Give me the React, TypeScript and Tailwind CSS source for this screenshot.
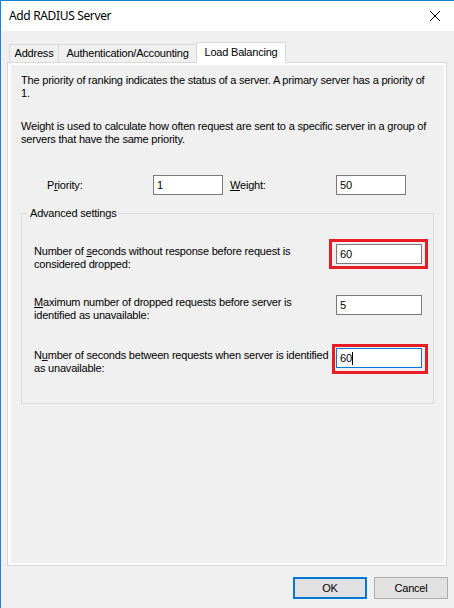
import React from 'react';

// Windows-style "Add RADIUS Server" dialog, Load Balancing tab

const font = "font-['Liberation_Sans',Arial,sans-serif]";

function TextBox({ value, focused = false, caret = false, className = '' }: { value: string; focused?: boolean; caret?: boolean; className?: string }) {
  return (
    <div
      className={`h-[20px] bg-white border flex items-center pl-[3px] text-[11px] text-black ${
        focused ? 'border-[#0078d7]' : 'border-[#7a7a7a]'
      } ${className}`}
    >
      <span>{value}</span>
      {caret && <span className="inline-block w-px h-[13px] bg-black" />}
    </div>
  );
}

function Highlight({ className }: { className: string }) {
  return <span className={`absolute border-[3px] border-[#e81c24] pointer-events-none ${className}`} />;
}

function SettingRow({ children, value, focused, caret, highlight, className = '' }: {
  children: React.ReactNode;
  value: string;
  focused?: boolean;
  caret?: boolean;
  highlight?: string;
  className?: string;
}) {
  return (
    <div className={`flex items-start pl-[12px] ${className}`}>
      <div className="w-[302px] leading-[13px] whitespace-nowrap pt-[1px]">{children}</div>
      <div className="relative">
        <TextBox value={value} focused={focused} caret={caret} className="w-[86px]" />
        {highlight && <Highlight className={highlight} />}
      </div>
    </div>
  );
}

export default function App() {
  return (
    <div className={`w-[454px] h-[608px] overflow-hidden bg-[#f0f0f0] border-l border-t border-[#1883d7] ${font} text-[11px] tracking-[-0.2px] text-black`}>
      {/* Title bar */}
      <div className="h-[30px] bg-white flex items-center justify-between pl-[8px] pr-[10px]">
        <span className="text-[12px] font-['Noto_Sans',sans-serif] tracking-[-0.35px] pb-[1px]">Add RADIUS Server</span>
        <svg width="12" height="12" viewBox="0 0 12 12" className="mr-[3px]">
          <path d="M1 1L11 11M11 1L1 11" stroke="#000" strokeWidth="1" />
        </svg>
      </div>

      {/* Tabs */}
      <div className="pt-[11px]">
        <div className="flex items-end h-[20px] ml-[8px]">
          <div className="w-[50px] h-[18px] border-l border-t border-r border-[#d9d9d9] flex items-center justify-center">
            Address
          </div>
          <div className="w-[138px] h-[18px] border-t border-r border-[#d9d9d9] flex items-center justify-center">
            Authentication/Accounting
          </div>
          <div className="relative z-10 -ml-px -mb-px w-[90px] h-[21px] bg-white border-l border-t border-r border-[#d9d9d9] flex items-center justify-center pb-[2px]">
            Load Balancing
          </div>
        </div>

        {/* Tab page */}
        <div className="ml-[6px] w-[440px] h-[504px] border border-[#d9d9d9] bg-white pl-[3px] pr-[2px] pt-[2px] pb-[2px]">
          <div className="h-full bg-[#f0f0f0] pt-[9px] pl-[10px] leading-[13px]">
            <p>
              The priority of ranking indicates the status of a server. A primary server has a priority of
              <br />
              1.
            </p>
            <p className="mt-[20px]">
              Weight is used to calculate how often request are sent to a specific server in a group of
              <br />
              servers that have the same priority.
            </p>

            {/* Priority / weight */}
            <div className="flex items-center mt-[29px] pl-[26px]">
              <span className="w-[106px]">
                P<span className="underline">r</span>iority:
              </span>
              <TextBox value="1" className="w-[70px]" />
              <span className="w-[106px] ml-[7px]">
                <span className="underline">W</span>eight:
              </span>
              <TextBox value="50" className="w-[70px]" />
            </div>

            {/* Advanced settings */}
            <fieldset className="mt-[12px] w-[413px] border border-[#dcdcdc] pb-[28px]">
              <legend className="ml-[5px] pl-[3px] pr-[1px] leading-[13px]">Advanced settings</legend>
              <SettingRow value="60" className="mt-[24px]" highlight="-left-[7px] -top-[5px] w-[99px] h-[30px]">
                Number of <span className="underline">s</span>econds without response before request is
                <br />
                considered dropped:
              </SettingRow>
              <SettingRow value="5" className="mt-[24px]">
                <span className="underline">M</span>aximum number of dropped requests before server is
                <br />
                identified as unavailable:
              </SettingRow>
              <SettingRow value="60" focused caret className="mt-[26px]" highlight="-left-[4px] -top-[4px] w-[96px] h-[30px]">
                N<span className="underline">u</span>mber of seconds between requests when server is identified
                <br />
                as unavailable:
              </SettingRow>
            </fieldset>
          </div>
        </div>
      </div>

      {/* Buttons */}
      <div className="flex justify-end gap-[7px] pr-[6px] mt-[11px]">
        <button className="w-[74px] h-[22px] bg-[#e1e1e1] border-2 border-[#0078d7] text-[11px] leading-none">OK</button>
        <button className="w-[74px] h-[22px] bg-[#e1e1e1] border border-[#adadad] text-[11px] leading-none">Cancel</button>
      </div>
    </div>
  );
}
